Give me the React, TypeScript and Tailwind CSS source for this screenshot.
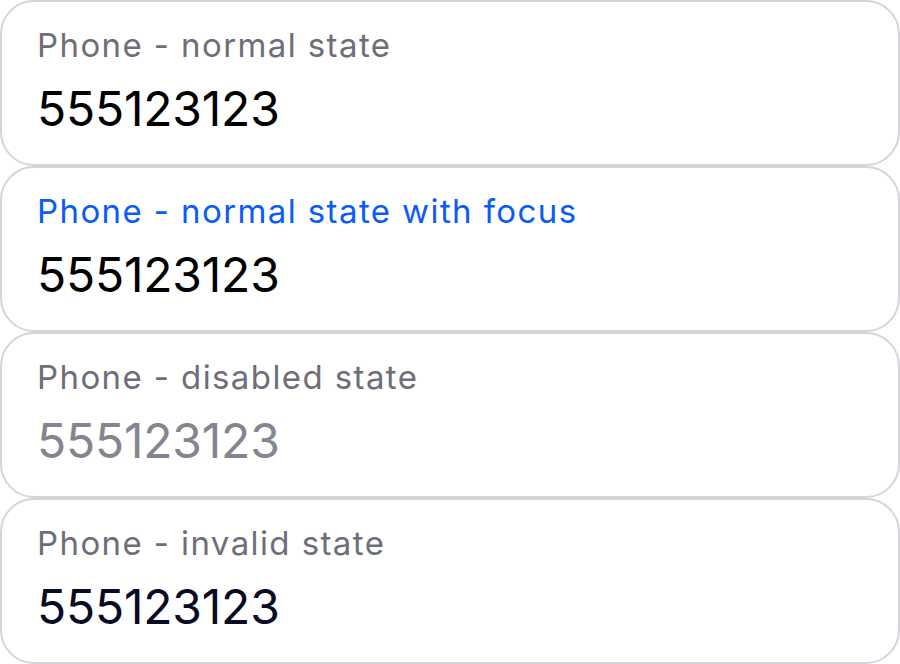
import React from 'react';

type FieldState = 'normal' | 'focus' | 'disabled' | 'invalid';

interface Field {
  label: string;
  value: string;
  state: FieldState;
}

const fields: Field[] = [
  { label: 'Phone - normal state', value: '555123123', state: 'normal' },
  { label: 'Phone - normal state with focus', value: '555123123', state: 'focus' },
  { label: 'Phone - disabled state', value: '555123123', state: 'disabled' },
  { label: 'Phone - invalid state', value: '555123123', state: 'invalid' },
];

const labelColor: Record<FieldState, string> = {
  normal: 'text-[#6e6e78]',
  focus: 'text-[#0a5cf5]',
  disabled: 'text-[#6e6e78]',
  invalid: 'text-[#6e6e78]',
};

const valueColor: Record<FieldState, string> = {
  normal: 'text-black',
  focus: 'text-black',
  disabled: 'text-[#85858f]',
  invalid: 'text-[#0a0a24]',
};

const PhoneField: React.FC<Field> = ({ label, value, state }) => (
  <div className="h-[166px] rounded-[34px] border-[2.5px] border-[#d4d4da] bg-white px-[35px] pt-[21px]">
    <div className={`text-[33px] leading-[44px] tracking-[1.4px] ${labelColor[state]}`}>{label}</div>
    <div className={`mt-[12px] text-[48px] leading-[60px] tracking-[-0.2px] ${valueColor[state]}`}>{value}</div>
  </div>
);

export default function App() {
  return (
    <div className="flex h-[664px] w-[900px] flex-col bg-white font-['Inter',sans-serif]">
      {fields.map((f) => (
        <PhoneField key={f.label} {...f} />
      ))}
    </div>
  );
}
